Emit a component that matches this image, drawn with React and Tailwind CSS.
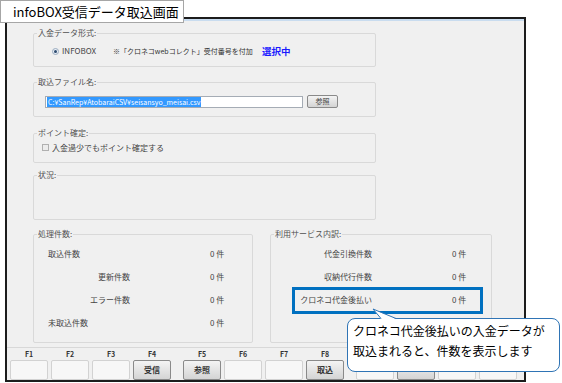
import React from "react";

const font = "font-['Noto_Sans_CJK_JP','Noto_Sans',sans-serif]";

const fkeyGroups = [
  [{ k: "F1" }, { k: "F2" }, { k: "F3" }, { k: "F4", t: "受信" }],
  [{ k: "F5", t: "参照" }, { k: "F6" }, { k: "F7" }, { k: "F8", t: "取込" }],
  // F9-F12 sit under the callout; their captions are hidden in the shot
  [{ k: "" }, { k: "", raised: true }, { k: "" }, { k: "" }],
];

const leftRows = [
  { label: "取込件数", align: "text-left" },
  { label: "更新件数", align: "text-right" },
  { label: "エラー件数", align: "text-right" },
  { label: "未取込件数", align: "text-left" },
];

const rightRows = ["代金引換件数", "収納代行件数", "クロネコ代金後払い"];

const Group = ({ title, className, children }) => (
  <fieldset className={`border border-[#d9d9d9] rounded-[2px] p-0 m-0 min-w-0 ${className}`}>
    <legend className="ml-[3px] px-[1px] text-[8px] leading-[12px] text-[#505050]">{title}</legend>
    {children}
  </fieldset>
);

const FKey = ({ k, t, raised }) => {
  const up = raised || t;
  return (
    <div className="w-[38px] flex flex-col items-center">
      <span className="h-[12px] text-[7px] leading-[13px] font-bold text-[#333]">{k}</span>
      <div
        className={
          up
            ? "w-[38px] h-[20px] rounded-[2px] border border-[#8a8a8a] bg-gradient-to-b from-[#f4f4f4] to-[#d4d4d4] flex items-center justify-center text-[8px] font-bold text-[#333]"
            : "w-[38px] h-[20px] rounded-[2px] border border-[#d2d2d2] bg-[#f7f7f7]"
        }
      >
        {t}
      </div>
    </div>
  );
};

export default function App() {
  return (
    <div className={`relative w-[562px] h-[383px] bg-white overflow-hidden ${font}`}>
      <div className="pl-[5px] pt-[17px]">
        <div className="w-[521px] h-[365px] border-2 border-[#1c1c1c] bg-[#f0f0f0] flex flex-col">
          <div className="h-[2px] bg-[#c9dcef]" />

          <div className="flex flex-col pl-[26px] pt-[6px]">
            <Group title="入金データ形式:" className="w-[343px] h-[40px]">
              <div className="flex items-center h-[24px] pl-[18px] text-[8px] text-[#444] whitespace-nowrap">
                <span className="shrink-0 w-[7px] h-[7px] rounded-full border border-[#9aabbf] bg-[#e8eef5] flex items-center justify-center">
                  <span className="w-[3px] h-[3px] rounded-full bg-[#2d4b70]" />
                </span>
                <span className="shrink-0 ml-[3px] w-[51px]">INFOBOX</span>
                <span className="shrink-0 w-[149px] text-[7px] text-[#333]">※「クロネコwebコレクト」受付番号を付加</span>
                <span className="shrink-0 text-[9.5px] font-bold text-[#1a1aff]">選択中</span>
              </div>
            </Group>

            <Group title="取込ファイル名:" className="w-[343px] h-[41px] mt-[9px]">
              <div className="flex items-center mt-[7px] pl-[11px]">
                <div className="w-[258px] h-[12px] bg-white border border-[#a5acb5] flex items-center pl-[1px]">
                  <span className="bg-[#3399ff] text-white text-[7px] leading-[10px] px-[1px] whitespace-nowrap">
                    C:¥SanRep¥AtobaraiCSV¥seisansyo_meisai.csv
                  </span>
                </div>
                <div className="ml-[4px] w-[31px] h-[13px] rounded-[2px] border border-[#8a8a8a] bg-gradient-to-b from-[#f4f4f4] to-[#d4d4d4] flex items-center justify-center text-[7px] text-[#444]">
                  参照
                </div>
              </div>
            </Group>

            <Group title="ポイント確定:" className="w-[343px] h-[36px] mt-[10px]">
              <div className="flex items-center h-[17px] pl-[8px] text-[8px] text-[#444]">
                <span className="w-[7px] h-[7px] border border-[#b0b0b0] bg-[#ececec]" />
                <span className="ml-[3px]">入金過少でもポイント確定する</span>
              </div>
            </Group>

            <Group title="状況:" className="w-[343px] h-[51px] mt-[6px]" />

            <div className="flex mt-[8px] gap-[17px]">
              <Group title="処理件数:" className="w-[220px] h-[115px]">
                <div className="pt-[2px]">
                  {leftRows.map((r) => (
                    <div key={r.label} className="flex items-center h-[23px] pl-[14px] text-[8px] text-[#444]">
                      <span className={`w-[82px] ${r.align}`}>{r.label}</span>
                      <span className="ml-[80px]">0 件</span>
                    </div>
                  ))}
                </div>
              </Group>

              <Group title="利用サービス内訳:" className="w-[222px] h-[115px]">
                <div className="pt-[2px]">
                  {rightRows.map((r) => (
                    <div key={r} className="flex items-center h-[23px] text-[8px] text-[#444]">
                      <span className="w-[101px] text-right">{r}</span>
                      <span className="ml-[80px]">0 件</span>
                    </div>
                  ))}
                </div>
              </Group>
            </div>
          </div>

          <div className="mt-[4px] border-t border-[#d8d8d8] flex pl-[3px] gap-[12px]">
            {fkeyGroups.map((g, i) => (
              <div key={i} className="flex gap-[3px]">
                {g.map((f, j) => (
                  <FKey key={j} {...f} />
                ))}
              </div>
            ))}
          </div>
        </div>
      </div>

      {/* title tab */}
      <div className="absolute left-0 top-0 w-[184px] h-[23px] bg-white border border-[#a6a6a6] pl-[12px] text-[13px] leading-[21px] text-black">
        infoBOX受信データ取込画面
      </div>

      {/* highlight */}
      <div className="absolute left-[292px] top-[287px] w-[191px] h-[27px] border-[3px] border-[#0070c0]" />

      {/* callout */}
      <div className="absolute left-[347px] top-[318px] w-[213px] h-[54px] bg-white border border-[#2f74b5] rounded-[8px] pt-[2px] pl-[5px] text-[12px] leading-[20px] text-black">
        <div>クロネコ代金後払いの入金データが</div>
        <div>取込まれると、件数を表示します</div>
      </div>
      <svg className="absolute left-[368px] top-[304px]" width="32" height="16" viewBox="0 0 32 16">
        <polygon points="5,5 13,15 28,15" fill="white" />
        <polyline points="13,14.5 5,5 28,14.5" fill="none" stroke="#2f74b5" strokeWidth="1" />
      </svg>
    </div>
  );
}
